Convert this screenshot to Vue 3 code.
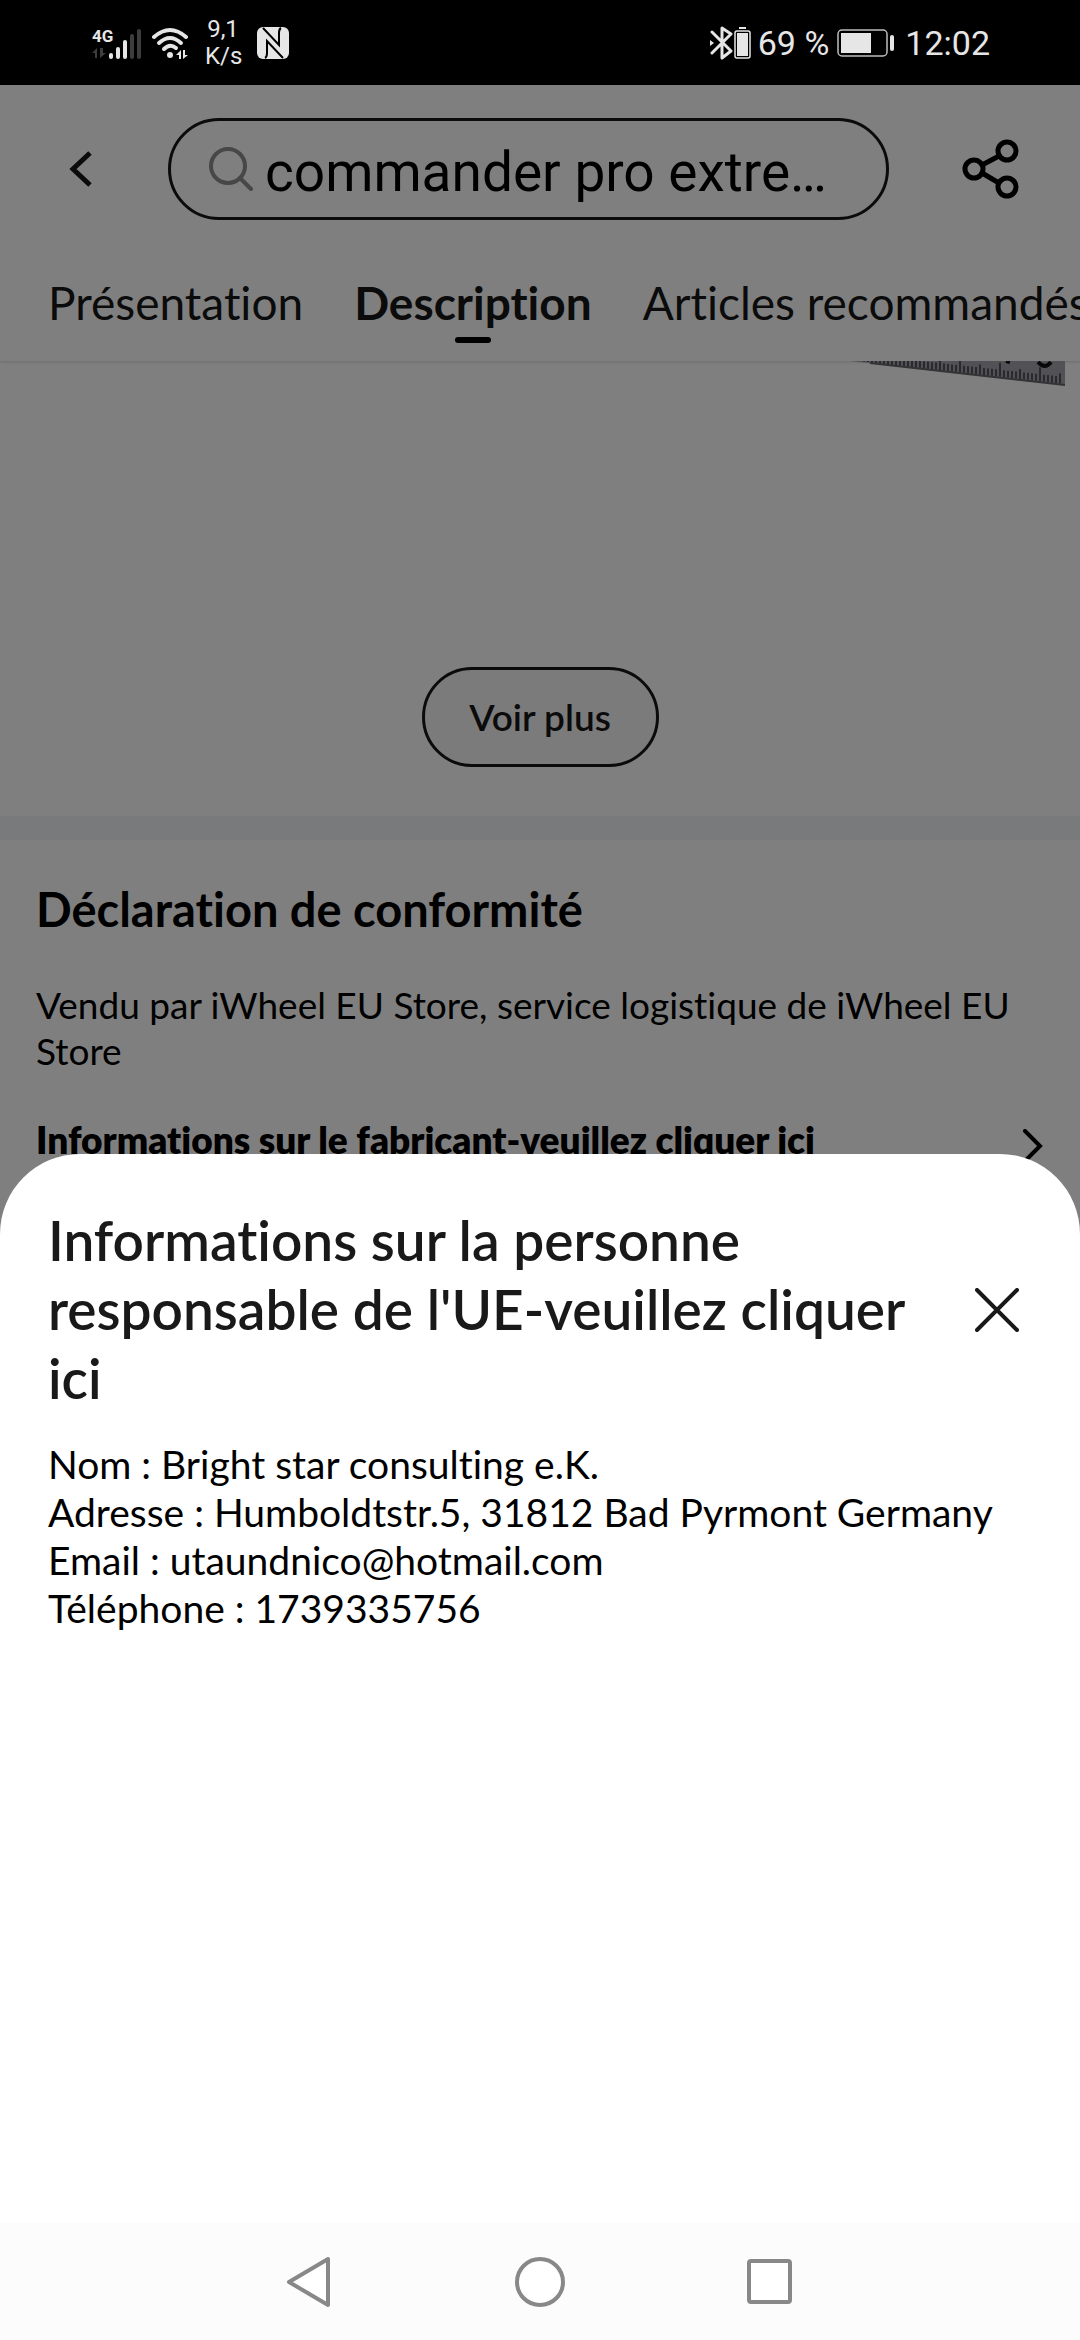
<script setup>
import { ref } from 'vue'

const query = ref('commander pro extre…')
const tabs = [
  { label: 'Présentation', active: false },
  { label: 'Description', active: true },
  { label: 'Articles recommandés', active: false },
]
const contact = [
  'Nom : Bright star consulting e.K.',
  'Adresse : Humboldtstr.5, 31812 Bad Pyrmont Germany',
  'Email : utaundnico@hotmail.com',
  'Téléphone : 1739335756',
]
// Graduations of the steel rule: every fifth one is longer
const ticks = Array.from({ length: 50 }, (_, i) => {
  const x = 14 + i * 4
  const y = (x * 24) / 215
  const len = i % 10 === 4 ? 15 : i % 5 === 4 ? 11 : 8
  return { x, y1: Math.max(0, y - len), y2: y - 1 }
})
</script>

<template>
  <div class="screen">
    <header class="status">
      <div class="status-side">
        <svg class="signal" width="50" height="34" viewBox="0 0 50 34" aria-hidden="true">
          <text x="0" y="16" class="net">4G</text>
          <g fill="#3d3d3d">
            <path d="M0 27l5-5v10H3v-5zM8 22v10l6-5h-3v-5z" />
            <rect x="38" y="8" width="4" height="25" rx="2" />
            <rect x="45" y="3" width="4" height="30" rx="2" />
          </g>
          <g fill="#e6e6e6">
            <rect x="17" y="27" width="4" height="6" rx="2" />
            <rect x="24" y="21" width="4" height="12" rx="2" />
            <rect x="31" y="14" width="4" height="19" rx="2" />
          </g>
        </svg>
        <svg class="wifi" width="38" height="34" viewBox="0 0 38 34" aria-hidden="true">
          <g fill="none" stroke="#e6e6e6" stroke-width="4" stroke-linecap="round">
            <path d="M3 11Q19-3 35 11" />
            <path d="M8 17Q19 7 30 17" />
            <path d="M13 23Q19 17 25 22" />
          </g>
          <circle cx="19" cy="29" r="3" fill="#e6e6e6" />
          <path d="M25 29l5-5v9h-2v-4zM32 24v9l5-4h-3v-5z" fill="#e6e6e6" />
        </svg>
        <div class="speed"><span>9,1</span><span>K/s</span></div>
        <svg width="32" height="32" viewBox="0 0 32 32" aria-hidden="true">
          <rect width="32" height="32" rx="6" fill="#e6e6e6" />
          <path d="M6 1l16 17V6q0-4 2-5M26 31L10 14v12q0 4-2 5" fill="none" stroke="#000" stroke-width="2" />
        </svg>
      </div>
      <div class="status-side">
        <svg width="42" height="34" viewBox="0 0 42 34" aria-hidden="true">
          <path d="M2 6l19 19-9 7V2l9 6L2 27" fill="none" stroke="#e6e6e6" stroke-width="3" stroke-linejoin="round" stroke-linecap="round" />
          <path d="M0 14l4 3-4 3z" fill="#e6e6e6" />
          <path d="M29 1h7v2h-7z" fill="#e6e6e6" />
          <rect x="25" y="5" width="15" height="27" rx="2" fill="none" stroke="#e6e6e6" stroke-width="1.5" />
          <rect x="27" y="7" width="11" height="23" fill="#e6e6e6" />
        </svg>
        <span class="percent">69 %</span>
        <svg class="battery" width="58" height="28" viewBox="0 0 58 28" aria-hidden="true">
          <rect x="1" y="1" width="49" height="26" rx="4" fill="none" stroke="#bdbdbd" stroke-width="1.5" />
          <rect x="4" y="4" width="30" height="20" fill="#e6e6e6" />
          <rect x="53" y="6" width="4" height="16" rx="2" fill="#e6e6e6" />
        </svg>
        <span>12:02</span>
      </div>
    </header>

    <main class="stage">
      <div class="page">
        <div class="topbar">
          <div class="search-row">
            <button class="icon-button back" aria-label="Retour">
              <svg width="28" height="40" viewBox="0 0 28 40" aria-hidden="true">
                <path d="M23 4L6 20l17 16" fill="none" stroke="#161616" stroke-width="5" />
              </svg>
            </button>
            <label class="search">
              <svg width="44" height="44" viewBox="0 0 44 44" aria-hidden="true">
                <circle cx="19" cy="19" r="17" fill="none" stroke="#8e8e8e" stroke-width="4" />
                <path d="M31 31l11 11" fill="none" stroke="#8e8e8e" stroke-width="4" stroke-linecap="round" />
              </svg>
              <input v-model="query" type="text" aria-label="Rechercher">
            </label>
            <button class="icon-button share" aria-label="Partager">
              <svg width="58" height="60" viewBox="0 0 58 60" fill="none" stroke="#000" stroke-width="5" aria-hidden="true">
                <circle cx="12" cy="30" r="9" />
                <circle cx="45" cy="12" r="9" />
                <circle cx="45" cy="48" r="9" />
                <path d="M20 26l17-9M20 34l17 10" />
              </svg>
            </button>
          </div>
          <nav class="tabs">
            <a v-for="tab in tabs" :key="tab.label" href="#" class="tab" :class="{ active: tab.active }">{{ tab.label }}</a>
          </nav>
        </div>

        <section class="product">
          <svg class="rule" width="215" height="25" viewBox="0 0 215 25" aria-hidden="true">
            <path d="M0 0h215v24z" fill="#a5a5ac" />
            <path d="M20 2l195 22" stroke="#66666c" stroke-width="2" />
            <path v-for="t in ticks" :key="t.x" :d="`M${t.x} ${t.y1}V${t.y2}`" stroke="#55555c" stroke-width="2" />
            <path d="M156 0l4 1M188 1q7 8 13 0" fill="none" stroke="#111" stroke-width="4" />
          </svg>
          <button class="more">Voir plus</button>
        </section>

        <section class="compliance">
          <h2>Déclaration de conformité</h2>
          <p>Vendu par iWheel EU Store, service logistique de iWheel EU Store</p>
          <a href="#" class="maker">
            <span>Informations sur le fabricant-veuillez cliquer ici</span>
            <svg width="22" height="34" viewBox="0 0 22 34" aria-hidden="true">
              <path d="M3 2l15 15L3 32" fill="none" stroke="#000" stroke-width="4" stroke-linecap="round" />
            </svg>
          </a>
        </section>
      </div>

      <div class="scrim">
        <section class="sheet" role="dialog" aria-labelledby="sheet-title">
          <div class="sheet-head">
            <h1 id="sheet-title">Informations sur la personne responsable de l'UE-veuillez cliquer ici</h1>
            <button class="icon-button" aria-label="Fermer">
              <svg width="44" height="44" viewBox="0 0 44 44" aria-hidden="true">
                <path d="M2 2l40 40M42 2L2 42" fill="none" stroke="#191919" stroke-width="4" stroke-linecap="round" />
              </svg>
            </button>
          </div>
          <ul class="contact">
            <li v-for="line in contact" :key="line">{{ line }}</li>
          </ul>
        </section>
      </div>
    </main>

    <nav class="system-nav" aria-label="Système">
      <button class="icon-button" aria-label="Précédent">
        <svg width="50" height="54" viewBox="0 0 50 54" aria-hidden="true">
          <path d="M43 4v46L4 27z" fill="#fff" stroke="#888" stroke-width="4" stroke-linejoin="round" />
        </svg>
      </button>
      <button class="icon-button" aria-label="Accueil">
        <svg width="50" height="54" viewBox="0 0 50 54" aria-hidden="true">
          <circle cx="25" cy="27" r="23" fill="#fff" stroke="#888" stroke-width="4" />
        </svg>
      </button>
      <button class="icon-button" aria-label="Applications récentes">
        <svg width="50" height="54" viewBox="0 0 50 54" aria-hidden="true">
          <rect x="4" y="6" width="41" height="41" rx="2" fill="#fff" stroke="#888" stroke-width="4" />
        </svg>
      </button>
    </nav>
  </div>
</template>

<style>
body {
  margin: 0;
}
</style>

<style scoped>
.screen {
  display: flex;
  flex-direction: column;
  height: 100vh;
  overflow: hidden;
  font-family: Lato, "Liberation Sans", sans-serif;
  font-variant-ligatures: none;
  color: #161616;
}

h1,
h2,
p,
ul {
  margin: 0;
  padding: 0;
}

a {
  color: inherit;
  text-decoration: none;
}

svg {
  display: block;
  flex: none;
}

.icon-button {
  display: flex;
  flex: none;
  padding: 0;
  border: 0;
  background: none;
}

.status {
  display: flex;
  flex: none;
  justify-content: space-between;
  height: 85px;
  padding: 0 90px 0 92px;
  background: #000;
  color: #e6e6e6;
  font-family: Roboto, sans-serif;
  font-size: 34px;
}

.status-side {
  display: flex;
  align-items: center;
}

.net {
  fill: #e6e6e6;
  font-size: 17px;
  font-weight: 700;
}

.wifi {
  margin: 0 16px 0 9px;
}

.speed {
  display: flex;
  flex-direction: column;
  width: 36px;
  margin-right: 16px;
  font-size: 24px;
  line-height: 27px;
  text-align: center;
}

.percent {
  margin-left: 6px;
}

.battery {
  margin: 0 10px 0 8px;
}

.stage {
  position: relative;
  flex: 1;
  min-height: 0;
  overflow: hidden;
}

.page {
  background: #fff;
}

.topbar {
  padding: 33px 0 18px;
  box-shadow: 0 1px 3px rgba(0, 0, 0, 0.15);
}

.search-row {
  display: flex;
  align-items: center;
  padding: 0 60px 0 67px;
}

.search {
  display: flex;
  flex: 1;
  align-items: center;
  gap: 12px;
  box-sizing: border-box;
  height: 102px;
  min-width: 0;
  margin: 0 73px;
  padding: 0 30px 0 38px;
  border: 3px solid #161616;
  border-radius: 51px;
}

.search input {
  flex: 1;
  min-width: 0;
  padding: 6px 0 0;
  border: 0;
  outline: 0;
  background: none;
  color: #000;
  font-family: Roboto, sans-serif;
  font-size: 55px;
}

.tabs {
  display: flex;
  gap: 51px;
  margin-top: 53px;
  padding-left: 48px;
  overflow: hidden;
  font-size: 46px;
  line-height: 60px;
  white-space: nowrap;
}

.tab {
  display: flex;
  flex: none;
  flex-direction: column;
  align-items: center;
  gap: 4px;
}

.tab::after {
  width: 36px;
  height: 6px;
  border-radius: 3px;
  content: "";
}

.tab.active {
  font-weight: 700;
}

.tab.active::after {
  background: #000;
}

.product {
  display: flex;
  flex-direction: column;
  align-items: center;
  padding-bottom: 49px;
  border-bottom: 24px solid #f2f4f7;
}

.rule {
  align-self: flex-end;
  margin-right: 15px;
}

.more {
  box-sizing: border-box;
  width: 237px;
  height: 100px;
  margin-top: 281px;
  padding: 0;
  border: 3px solid #161616;
  border-radius: 50px;
  background: #f7f7f7;
  color: #161616;
  font: 600 37px/44px Lato, "Liberation Sans", sans-serif;
}

.compliance {
  padding: 39px 36px;
  color: #000;
}

.compliance h2 {
  font-size: 47px;
  font-weight: 700;
  line-height: 60px;
}

.compliance p {
  margin-top: 43px;
  font-size: 37px;
  line-height: 46px;
}

.maker {
  display: flex;
  align-items: flex-end;
  justify-content: space-between;
  margin-top: 43px;
  font-size: 37px;
  font-weight: 800;
  line-height: 46px;
}

.scrim {
  position: absolute;
  inset: 0;
  display: flex;
  flex-direction: column;
  justify-content: flex-end;
  background: rgba(0, 0, 0, 0.5);
}

.sheet {
  box-sizing: border-box;
  height: 50%;
  padding: 52px 48px;
  border-radius: 80px 80px 0 0;
  background: #fff;
}

.sheet-head {
  display: flex;
  align-items: center;
  justify-content: space-between;
  padding: 0 13px 0 0;
}

.sheet-head h1 {
  max-width: 880px;
  color: #191919;
  font-size: 55px;
  font-weight: 600;
  line-height: 69px;
}

.contact {
  margin-top: 27px;
  color: #000;
  font-size: 39px;
  line-height: 48px;
  list-style: none;
}

.system-nav {
  display: flex;
  flex: none;
  justify-content: center;
  align-items: center;
  gap: 180px;
  height: 117px;
  background: #fcfcfc;
}
</style>
